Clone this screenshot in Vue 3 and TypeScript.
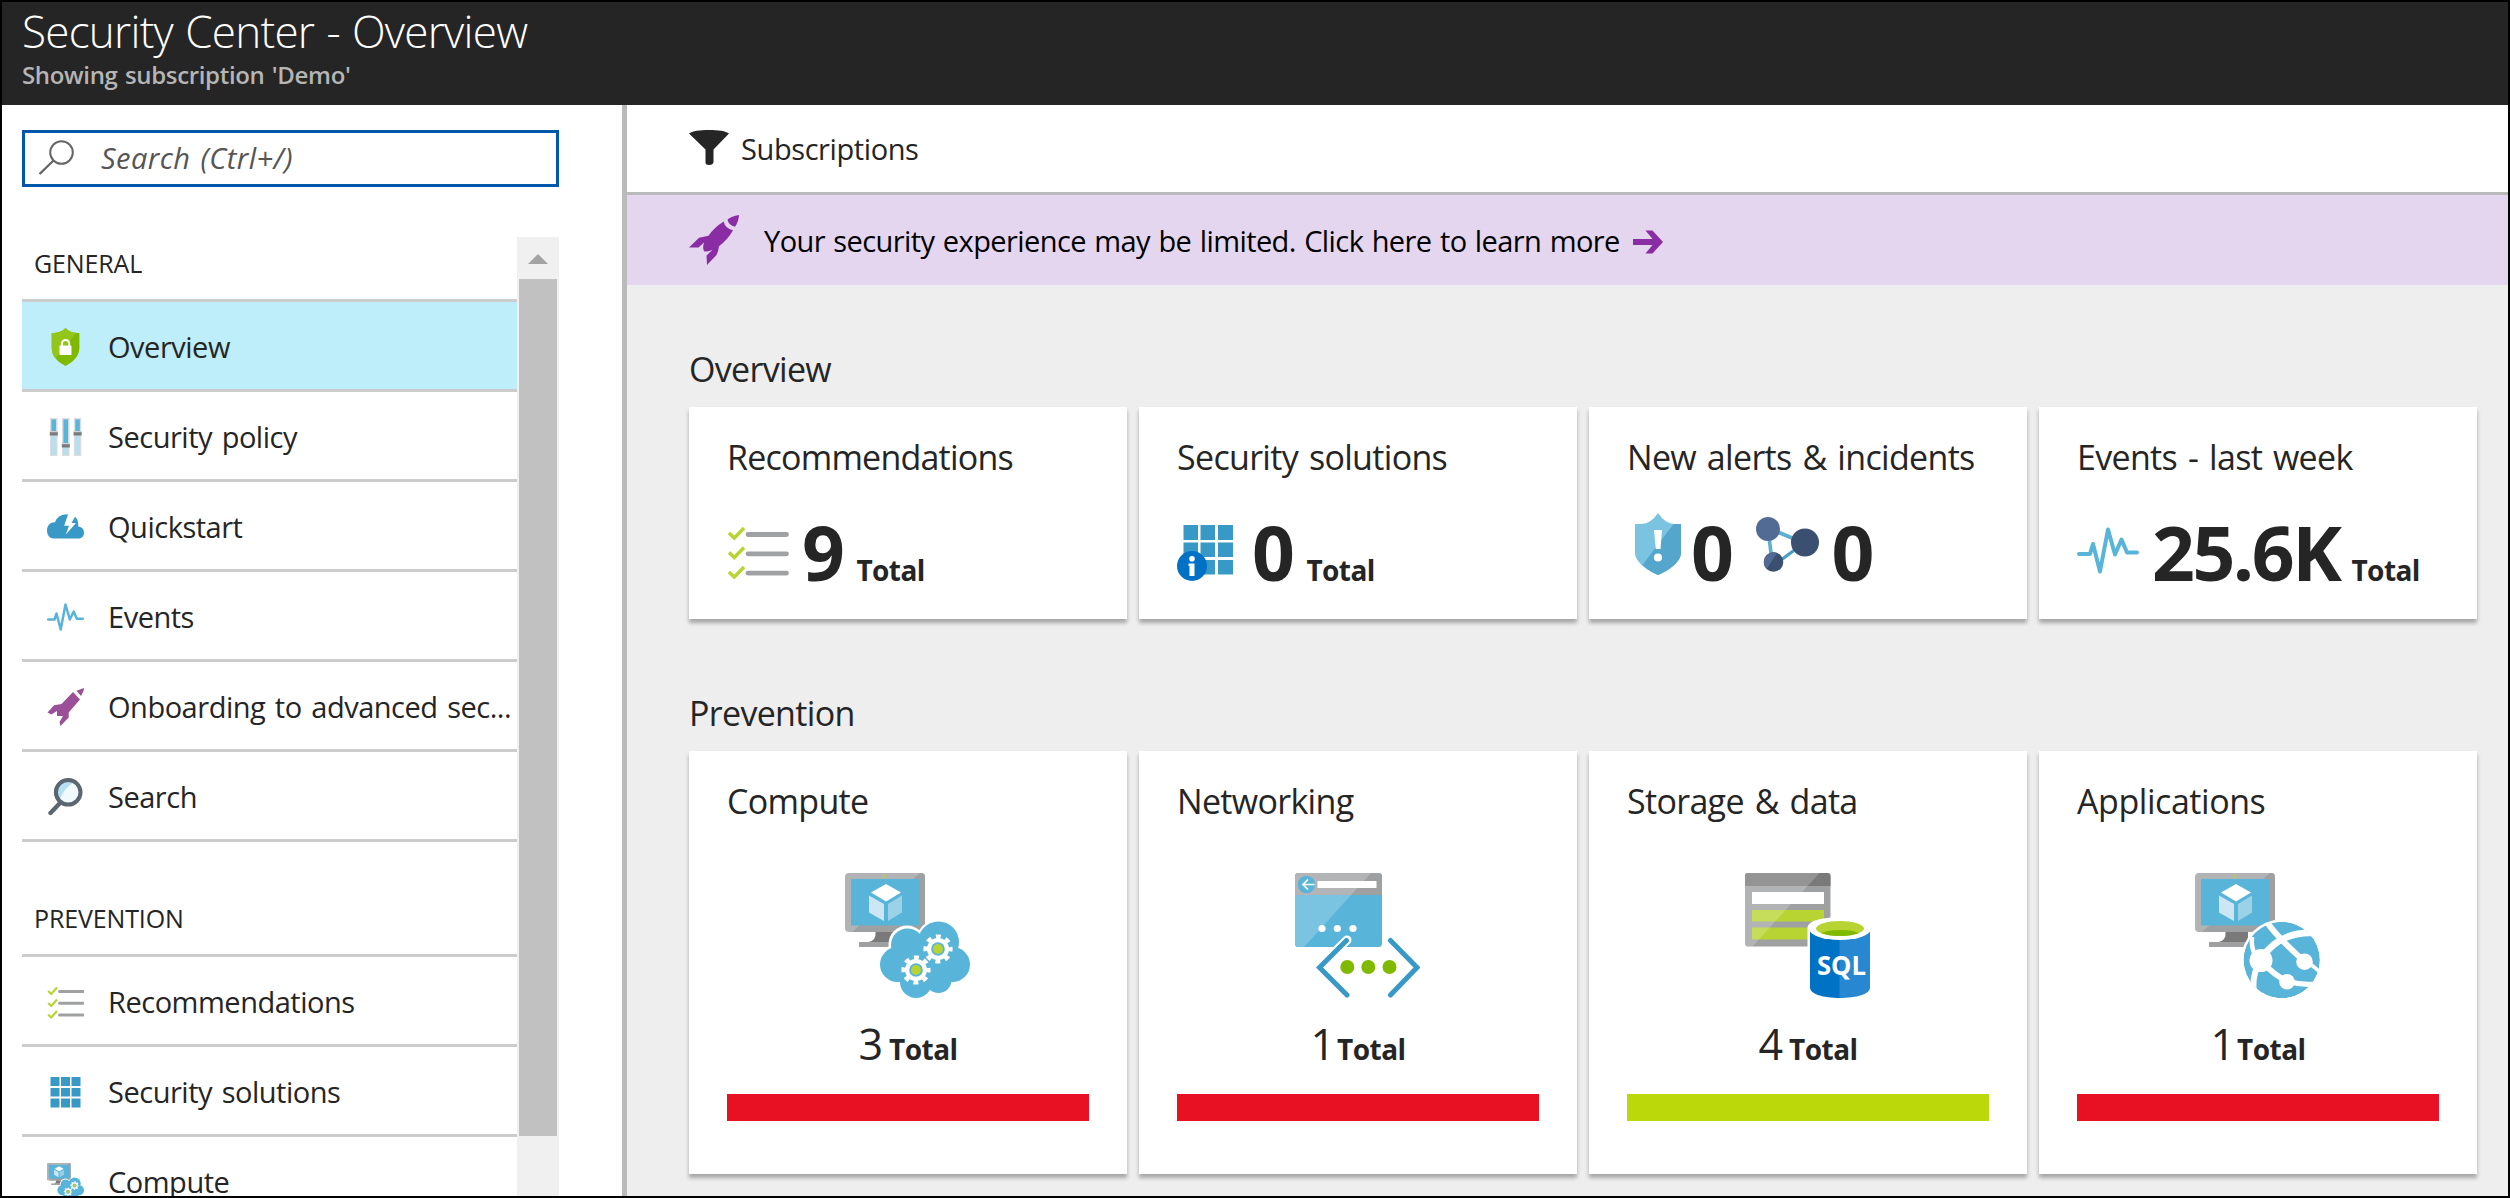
<script setup lang="ts">
interface MenuItem {
  label: string
  icon: string
  active?: boolean
}
interface MenuGroup {
  title: string
  items: MenuItem[]
}
interface Metric {
  icon: string
  value: string
  suffix?: string
}
interface Tile {
  title: string
  cls: string
  metrics: Metric[]
}
interface Resource {
  title: string
  cls: string
  icon: string
  count: number
  healthy?: boolean
}

const groups: MenuGroup[] = [
  {
    title: 'GENERAL',
    items: [
      { label: 'Overview', icon: 'shield', active: true },
      { label: 'Security policy', icon: 'sliders' },
      { label: 'Quickstart', icon: 'cloud' },
      { label: 'Events', icon: 'pulse-sm' },
      { label: 'Onboarding to advanced sec...', icon: 'rocket-sm' },
      { label: 'Search', icon: 'lens' },
    ],
  },
  {
    title: 'PREVENTION',
    items: [
      { label: 'Recommendations', icon: 'list-sm' },
      { label: 'Security solutions', icon: 'grid-sm' },
      { label: 'Compute', icon: 'compute-sm' },
    ],
  },
]

const tiles: Tile[] = [
  { title: 'Recommendations', cls: 'recommendations', metrics: [{ icon: 'list', value: '9', suffix: 'Total' }] },
  { title: 'Security solutions', cls: 'solutions', metrics: [{ icon: 'grid', value: '0', suffix: 'Total' }] },
  {
    title: 'New alerts & incidents',
    cls: 'alerts',
    metrics: [
      { icon: 'alert', value: '0' },
      { icon: 'incident', value: '0' },
    ],
  },
  { title: 'Events - last week', cls: 'events', metrics: [{ icon: 'pulse', value: '25.6K', suffix: 'Total' }] },
]

const resources: Resource[] = [
  { title: 'Compute', cls: 'compute', icon: 'compute', count: 3 },
  { title: 'Networking', cls: 'networking', icon: 'network', count: 1 },
  { title: 'Storage & data', cls: 'storage', icon: 'storage', count: 4, healthy: true },
  { title: 'Applications', cls: 'applications', icon: 'apps', count: 1 },
]
</script>

<template>
  <div class="blade">
    <svg class="sprite" width="0" height="0" aria-hidden="true">
      <symbol id="i-shield" viewBox="0 0 37 38">
        <path d="M18.5 0C22 4 27 5 32.4 5V20C32.4 29 25 34.500 18.500 38C12 34.500 4.700 29 4.700 20V5C10 5 15 4 18.500 0Z" fill="#7fba00" />
        <path d="M18.500 0C21 3 25 4.500 29 4.900L8.500 30.500C6.200 27.500 4.700 24 4.700 20V5C10 5 15 4 18.500 0Z" fill="#94c61a" />
        <rect x="12.500" y="17.500" width="12" height="9.500" rx=".8" fill="#fff" />
        <path d="M15 18V15.500a3.600 3.600 0 0 1 7.200 0V18" fill="none" stroke="#fff" stroke-width="2" />
      </symbol>
      <symbol id="i-sliders" viewBox="0 0 37 38">
        <g stroke="#dcdcdc" stroke-width="1">
          <rect x="3.500" y=".5" width="6.500" height="37" fill="#b7dff0" />
          <rect x="15.500" y=".5" width="6.500" height="37" fill="#b7dff0" />
          <rect x="27.300" y=".5" width="6.500" height="37" fill="#b7dff0" />
        </g>
        <path d="M4.500 1.500h4.500v13h-4.500zM16.500 1.500h4.500v25h-4.500zM28.300 1.500h4.500v13h-4.500z" fill="#59b4d9" />
        <path d="M2.800 14h8v3.500h-8zM14.800 26h8v3.500h-8zM26.600 14h8v3.500h-8z" fill="#7a7a7a" />
        <path d="M2.800 13h8v1.300h-8zM14.800 25h8v1.300h-8zM26.600 13h8v1.300h-8z" fill="#d0d0d0" />
      </symbol>
      <symbol id="i-cloud" viewBox="0 0 37 38">
        <path d="M7 30.500C2.500 30.500 0 27 0 22.500C0 17.500 3.500 14 8 14.300C9.500 9.500 14 6 21 6.200L17.200 17.800H22L18.800 26.500L29 15H24.500L28 8.800C30 10.500 31.500 13 31.300 18.500C35 19 37 21.500 37 24.500C37 28 35 30.500 31.500 30.500Z" fill="#3999c6" />
      </symbol>
      <symbol id="i-pulse-sm" viewBox="0 0 37 38">
        <path d="M1.200 21.500H7.500L9.500 15.500L13.700 31.500L18.500 6.500L22.800 21.500L26.700 13.500L29.800 20.700H35.800" fill="none" stroke="#59b4d9" stroke-width="2.500" stroke-linecap="round" stroke-linejoin="round" />
      </symbol>
      <symbol id="i-rocket-sm" viewBox="0 0 37 38">
        <path d="M37 0L36.500 3L34 8L29.500 2.700Z" fill="#9b4f96" />
        <path d="M26 4L33 11.500L21.700 24.500V29.500L13.500 38L12.500 34L16 28H10V23L4.300 26.500L.5 24.500L7 17.300L14.500 16Z" fill="#9b4f96" />
      </symbol>
      <symbol id="i-lens" viewBox="0 0 37 38">
        <path d="M13.500 24.500L3.500 35" stroke="#5b6672" stroke-width="4.400" stroke-linecap="round" />
        <circle cx="21.200" cy="14.300" r="12" fill="#f0f9fd" />
        <path d="M11.500 23A12 12 0 0 1 27 4Q17 10 12 23Z" fill="#b5dff3" />
        <circle cx="21.200" cy="14.300" r="12.300" fill="none" stroke="#5b6672" stroke-width="4" />
      </symbol>
      <symbol id="i-list-sm" viewBox="0 0 37 38">
        <path d="M12.500 8.500H36M12.500 20.300H36M12.500 32H36" stroke="#a0a1a2" stroke-width="3" stroke-linecap="round" />
        <path d="M1.200 8L4.200 11L10 4.500M1.200 20L4.200 23L10 16.500M1.200 31.500L4.200 34.500L10 28" fill="none" stroke="#b8d432" stroke-width="2.200" />
      </symbol>
      <symbol id="i-grid-sm" viewBox="0 0 37 38">
        <path d="M3.500 4h9v9h-9zM14 4h9v9h-9zM24.500 4h9v9h-9zM3.500 15h9v8.500h-9zM14 15h9v8.500h-9zM24.500 15h9v8.500h-9zM3.500 25.500h9v9h-9zM14 25.500h9v9h-9zM24.500 25.500h9v9h-9z" fill="#3999c6" />
      </symbol>

      <symbol id="i-funnel" viewBox="0 0 40 35">
        <path d="M0 3.500C3 1 11 0 20 0S37 1 40 3.500L24.500 19.500V32.500Q23.500 35 20 35T16.500 32.500V19.500Z" fill="#252525" />
      </symbol>
      <symbol id="i-rocket" viewBox="0 0 50 50">
        <path d="M50 0Q42.500 1 38.500 4.500Q39.500 10.500 46 11.800Q49.500 7 50 0Z" fill="#8a2da5" />
        <path d="M34.700 6.500Q36 13.500 44 15.300Q39 24.500 30 31.200Q29.500 36 27.500 40L18 50L17.500 40.500L23.500 34.800Q20 37 15.500 36.500Q13 34 15 27.500L9.500 32.500H0L10 22.800L19.500 20.800Q25 12.500 34.700 6.500Z" fill="#8a2da5" />
      </symbol>
      <symbol id="i-arrow" viewBox="0 0 30 24">
        <path d="M0 9H19.500L12.500 .5H19.500L30 12L19.500 23.500H12.500L19.500 15H0Z" fill="#8a2da5" />
      </symbol>

      <symbol id="i-list" viewBox="0 0 61 56">
        <path d="M20 10.500H58.500M20 29.800H58.500M20 49.200H58.500" stroke="#a0a1a2" stroke-width="4.800" stroke-linecap="round" />
        <path d="M1 9L6.300 14L16 4M1 28.500L6.300 33.500L16 23.500M1 48L6.300 53L16 43" fill="none" stroke="#b8d432" stroke-width="3.400" />
      </symbol>
      <symbol id="i-grid" viewBox="0 0 56 56">
        <path d="M6.500 0h14.500v15h-14.500zM23.500 0h14.500v15h-14.500zM41 0h15v15h-15zM6.500 17.500h14.500v14.500h-14.500zM23.500 17.500h14.500v14.500h-14.500zM41 17.500h15v14.500h-15zM6.500 35h14.500v14.500h-14.500zM23.500 35h14.500v14.500h-14.500zM41 35h15v14.500h-15z" fill="#3999c6" />
        <circle cx="15" cy="41" r="15" fill="#0072c6" />
        <circle cx="15" cy="33.700" r="2.800" fill="#fff" />
        <path d="M11.500 38.500H17.500V51H12.500V41H11.500Z" fill="#fff" />
      </symbol>
      <symbol id="i-alert" viewBox="0 0 46 62">
        <path d="M23 0Q30 10.500 39 11H46V40C46 49 33 58 23 62C13 58 0 49 0 40V11H7Q16 10.500 23 0Z" fill="#7bc4e1" />
        <path d="M38.500 11H46V40C46 49 33 58 23 62C17 59.500 11.500 56 7.500 52Z" fill="#55a6cd" />
        <path d="M19 17H27L25.500 36H20.800Z" fill="#fff" />
        <circle cx="23" cy="44.500" r="4.100" fill="#fff" />
      </symbol>
      <symbol id="i-incident" viewBox="0 0 63 55">
        <path d="M12 12L16 44" stroke="#5bb0cf" stroke-width="3.600" />
        <path d="M12 11L48 26" stroke="#5bb0cf" stroke-width="4" />
        <path d="M48 26L17 49" stroke="#4b9fc4" stroke-width="3.200" />
        <circle cx="12" cy="12" r="12" fill="#526b94" />
        <circle cx="49" cy="25.500" r="14" fill="#3b5070" />
        <circle cx="17.500" cy="45" r="9.800" fill="#3b5070" />
        <path d="M21 35.900A9.800 9.800 0 0 0 10.800 52Z" fill="#526b94" />
      </symbol>
      <symbol id="i-pulse" viewBox="0 0 62 56">
        <path d="M2 29H13L16 19L23 46.500L31 4.500L38 29.500L44.500 14.500L50 27.500H60" fill="none" stroke="#59b4d9" stroke-width="4" stroke-linecap="round" stroke-linejoin="round" />
      </symbol>

      <symbol id="i-monitor" viewBox="0 0 125 125">
        <rect width="80" height="59" rx="4" fill="#b2b3b5" />
        <path d="M75 0H76Q80 0 80 4V55Q80 59 76 59H7Z" fill="#9fa0a2" />
        <rect x="6" y="6" width="68.500" height="46.500" fill="#59b4d9" />
        <circle cx="39.700" cy="3.500" r="1.200" fill="#b8d432" />
        <path d="M41 11L56 19.500L41 28.500L26 19.500Z" fill="#fff" />
        <path d="M24 22.500L39 31V48L24 39.500Z" fill="#cde6f3" />
        <path d="M57 22.500L43 31V48L57 39.500Z" fill="#9bd2e8" />
        <path d="M30.500 59H53V69.500H22Q31.500 68.500 30.500 59Z" fill="#7a7a7a" />
        <rect x="14" y="69" width="38" height="5" fill="#9fa0a2" />
      </symbol>
      <symbol id="i-gear" viewBox="0 0 30 30">
        <circle cx="15" cy="15" r="11" fill="#fff" />
        <circle cx="15" cy="15" r="12" fill="none" stroke="#fff" stroke-width="5.200" stroke-dasharray="4.712" stroke-dashoffset="2.350" />
        <circle cx="15" cy="15" r="6.800" fill="#59b4d9" />
        <circle cx="15" cy="15" r="4.900" fill="#b8d432" />
      </symbol>
      <symbol id="i-compute" viewBox="0 0 125 125">
        <use href="#i-monitor" width="125" height="125" />
        <g fill="#fff">
          <circle cx="94" cy="69" r="23" />
          <circle cx="62" cy="71" r="18.500" />
          <circle cx="53" cy="91" r="20" />
        </g>
        <g fill="#59b4d9">
          <circle cx="93.500" cy="69" r="20.500" />
          <circle cx="62.500" cy="72" r="16.500" />
          <circle cx="52.500" cy="91.500" r="17.500" />
          <circle cx="107.500" cy="91.500" r="17.500" />
          <circle cx="71" cy="109" r="16" />
          <circle cx="93.500" cy="107" r="13" />
          <rect x="52" y="78" width="56" height="31" />
        </g>
        <use href="#i-gear" x="78" y="61" width="30" height="30" />
        <use href="#i-gear" x="56" y="82" width="30" height="30" />
      </symbol>
      <symbol id="i-compute-sm" viewBox="0 0 125 128">
        <use href="#i-compute" width="125" height="125" />
      </symbol>
      <symbol id="i-network" viewBox="0 0 125 125">
        <rect width="87" height="74" rx="3.500" fill="#59b4d9" />
        <path d="M3.500 0H76L9 74H3.500Q0 74 0 70.500V3.500Q0 0 3.500 0Z" fill="#7bc4e1" />
        <path d="M3.500 0H83.500Q87 0 87 3.500V22H0V3.500Q0 0 3.500 0Z" fill="#9fa0a2" />
        <path d="M3.500 0H76L56 22H0V3.500Q0 0 3.500 0Z" fill="#b3b4b6" />
        <circle cx="11.500" cy="11.500" r="8.700" fill="#59b4d9" />
        <path d="M19.500 11.500H8.500M13 6.500L8 11.500L13 16.500" fill="none" stroke="#fff" stroke-width="1.700" />
        <rect x="22.500" y="8" width="59" height="7" fill="#fff" />
        <g fill="#fff">
          <circle cx="27" cy="55.500" r="3.600" />
          <circle cx="42.300" cy="55.500" r="3.600" />
          <circle cx="58" cy="55.500" r="3.600" />
        </g>
        <path d="M52 67L24.500 94" fill="none" stroke="#fff" stroke-width="9" stroke-linecap="round" />
        <path d="M51.500 67.500L24.500 94.500L52 122M95.500 67.500L122 94.500L95.500 122" fill="none" stroke="#3999c6" stroke-width="5" stroke-linecap="round" />
        <g fill="#7fba00">
          <circle cx="52.300" cy="94" r="7" />
          <circle cx="73.300" cy="94" r="7" />
          <circle cx="94.500" cy="94" r="7" />
        </g>
      </symbol>
      <symbol id="i-storage" viewBox="0 0 125 125">
        <rect width="85.500" height="73.500" rx="3" fill="#9fa0a2" />
        <path d="M3 0H82.500Q85.500 0 85.500 3V13H0V3Q0 0 3 0Z" fill="#7a7a7a" />
        <path d="M7 37H79V48.500H7zM7 54.500H79V66.500H7z" fill="#b8d432" />
        <path d="M3 0H74.500L7.500 73.500H3Q0 73.500 0 70.500V3Q0 0 3 0Z" fill="#fff" fill-opacity=".2" />
        <rect x="7" y="19" width="72" height="12" fill="#fff" />
        <path d="M62.500 55C62.500 48 75 44.500 95 44.500S128 48 128 56V76H62.500Z" fill="#fff" />
        <path d="M65 56H95V125C78 125 65 121 65 114.500Z" fill="#0072c6" />
        <path d="M94.500 56H125V114.500C125 121 112 125 94.500 125Z" fill="#2788d1" />
        <ellipse cx="95" cy="55.500" rx="31" ry="11.500" fill="#fff" />
        <ellipse cx="95" cy="55.500" rx="24" ry="7.500" fill="#b8d432" />
        <path d="M76 60Q82 57 95 57T114 60Q107 63 95 63T76 60Z" fill="#7fba00" />
        <text x="96.500" y="102" text-anchor="middle" textLength="49" lengthAdjust="spacingAndGlyphs" class="sql">SQL</text>
      </symbol>
      <clipPath id="globe"><circle cx="86.700" cy="87" r="38.200" /></clipPath>
      <symbol id="i-apps" viewBox="0 0 125 125">
        <use href="#i-monitor" width="125" height="125" />
        <circle cx="86.700" cy="87" r="40.500" fill="#fff" />
        <g clip-path="url(#globe)">
          <circle cx="86.700" cy="87" r="38.200" fill="#59b4d9" />
          <g fill="none" stroke="#fff">
            <path d="M72 49Q80 62 109 88" stroke-width="6" />
            <path d="M66 86Q84 58 120 60" stroke-width="6.800" />
            <path d="M66 88Q80 103 92 108" stroke-width="5.500" />
            <path d="M92 108Q106 112.500 120 111" stroke-width="5" />
            <path d="M109 88Q118 92 127 101" stroke-width="3.600" />
            <path d="M57 64Q56 74 60 82" stroke-width="4.500" />
            <path d="M62 94Q57 106 59 120" stroke-width="6" />
          </g>
          <g fill="#fff">
            <circle cx="66" cy="87.500" r="11.500" />
            <circle cx="109.500" cy="88.700" r="8.300" />
            <circle cx="92" cy="108.700" r="7.800" />
          </g>
        </g>
      </symbol>
    </svg>

    <header class="header">
      <h1>Security Center - Overview</h1>
      <p>Showing subscription 'Demo'</p>
    </header>

    <div class="body">
      <aside class="side">
        <div class="search">
          <svg class="search-icon" viewBox="0 0 35 35" fill="none" stroke="#666" stroke-width="2">
            <circle cx="22.500" cy="12.500" r="11.300" />
            <path d="M14.500 20.500L.7 34" stroke-width="2.300" />
          </svg>
          <span>Search (Ctrl+/)</span>
        </div>
        <div class="menu-wrap">
          <nav class="menu">
            <section v-for="g in groups" :key="g.title" class="group">
              <h2>{{ g.title }}</h2>
              <div v-for="i in g.items" :key="i.label" class="item" :class="{ active: i.active }">
                <svg class="item-icon"><use :href="'#i-' + i.icon" /></svg>
                <span>{{ i.label }}</span>
              </div>
            </section>
          </nav>
          <div class="scrollbar">
            <div class="up"></div>
            <div class="thumb"></div>
          </div>
        </div>
      </aside>

      <main class="main">
        <div class="toolbar">
          <svg class="funnel"><use href="#i-funnel" /></svg>
          <span>Subscriptions</span>
        </div>
        <div class="banner">
          <svg class="rocket"><use href="#i-rocket" /></svg>
          <span>Your security experience may be limited. Click here to learn more</span>
          <svg class="arrow"><use href="#i-arrow" /></svg>
        </div>

        <section class="section">
          <h2>Overview</h2>
          <div class="cards">
            <article v-for="t in tiles" :key="t.title" class="card tile" :class="t.cls">
              <h3>{{ t.title }}</h3>
              <div class="metrics">
                <div v-for="m in t.metrics" :key="m.icon" class="metric">
                  <svg :class="'m-' + m.icon"><use :href="'#i-' + m.icon" /></svg>
                  <span class="value">{{ m.value }}</span>
                  <span v-if="m.suffix" class="total">{{ m.suffix }}</span>
                </div>
              </div>
            </article>
          </div>
        </section>

        <section class="section second">
          <h2>Prevention</h2>
          <div class="cards">
            <article v-for="r in resources" :key="r.title" class="card resource" :class="r.cls">
              <h3>{{ r.title }}</h3>
              <svg class="art"><use :href="'#i-' + r.icon" /></svg>
              <div class="count">
                <span class="num" :class="{ narrow: r.count === 1 }">{{ r.count }}</span>
                <span class="total">Total</span>
              </div>
              <div class="bar" :class="{ healthy: r.healthy }"></div>
            </article>
          </div>
        </section>
      </main>
    </div>
  </div>
</template>

<style>
body {
  background: #000;
}
</style>

<style scoped>
.blade {
  box-sizing: border-box;
  display: flex;
  flex-direction: column;
  width: 2510px;
  height: 1198px;
  border: 2px solid #000;
  overflow: hidden;
  background: #fff;
  color: #252525;
  font-family: "Open Sans", "Noto Sans", sans-serif;
  font-size: 29px;
}
h1, h2, h3, p {
  margin: 0;
  font-weight: 400;
}
svg {
  display: block;
  flex: none;
}
span, h1, h2, h3, p {
  white-space: nowrap;
}
.sprite {
  position: absolute;
}
.sql {
  fill: #fff;
  font: 700 27px "Open Sans", sans-serif;
}

.header {
  flex: none;
  height: 103px;
  padding-left: 20px;
  background: #252525;
}
.header h1 {
  color: #fff;
  font-size: 44px;
  font-weight: 300;
  line-height: 58px;
  letter-spacing: -0.017em;
  word-spacing: 1.5px;
}
.header p {
  color: #b5b5b5;
  font-size: 24px;
  font-weight: 600;
  line-height: 29px;
  letter-spacing: -0.014em;
  word-spacing: 1.5px;
}

.body {
  flex: 1;
  display: flex;
  min-height: 0;
}
.side {
  flex: none;
  display: flex;
  flex-direction: column;
  width: 600px;
  padding: 25px 0 0 20px;
  border-right: 5px solid #bababa;
}
.search {
  box-sizing: border-box;
  flex: none;
  display: flex;
  width: 537px;
  height: 57px;
  padding: 7px 0 0 14px;
  border: 3px solid #0058ad;
}
.search-icon {
  width: 35px;
  height: 35px;
}
.search span {
  margin-left: 27px;
  color: #555;
  font-style: italic;
  line-height: 35px;
  letter-spacing: 0.016em;
  word-spacing: 2px;
}
.menu-wrap {
  flex: 1;
  display: flex;
  width: 537px;
  min-height: 0;
  margin-top: 50px;
}
.menu {
  width: 495px;
  overflow: hidden;
}
.group h2 {
  height: 62px;
  padding-left: 12px;
  border-bottom: 3px solid #ccc;
  font-size: 25px;
  font-weight: 500;
  line-height: 53px;
  letter-spacing: -0.005em;
}
.group + .group {
  padding-top: 50px;
}
.item {
  display: flex;
  height: 87px;
  padding-left: 25px;
  border-bottom: 3px solid #ccc;
}
.item.active {
  background: #bdeef9;
}
.item-icon {
  width: 37px;
  height: 38px;
  margin: 26px 24px 0 0;
}
.item span {
  padding-top: 1px;
  line-height: 87px;
  letter-spacing: -0.0165em;
  word-spacing: 2.5px;
}
.scrollbar {
  display: flex;
  flex-direction: column;
  align-items: center;
  width: 42px;
  background: #f0f0f0;
}
.up {
  margin-top: 17px;
  border: 10px solid transparent;
  border-top: 0;
  border-bottom-color: #a3a3a3;
}
.thumb {
  width: 38px;
  height: 857px;
  margin-top: 15px;
  background: #c1c1c1;
}

.main {
  flex: 1;
  background: #eee;
}
.toolbar {
  display: flex;
  height: 87px;
  padding-left: 62px;
  border-bottom: 3px solid #bababa;
  background: #fff;
}
.funnel {
  width: 40px;
  height: 35px;
  margin: 25px 12px 0 0;
}
.toolbar span {
  line-height: 87px;
  letter-spacing: -0.014em;
}
.banner {
  display: flex;
  height: 90px;
  padding-left: 62px;
  background: #e4d6ef;
  color: #000;
}
.rocket {
  width: 50px;
  height: 50px;
  margin: 20px 25px 0 0;
}
.banner span {
  line-height: 91px;
  letter-spacing: -0.02em;
  word-spacing: 1.4px;
}
.arrow {
  width: 30px;
  height: 24px;
  margin: 35px 0 0 13px;
}

.section {
  padding: 58px 31px 0 62px;
}
.section.second {
  padding-top: 68px;
}
.section h2 {
  height: 64px;
  font-size: 34px;
  line-height: 53px;
  letter-spacing: -0.02em;
}
.cards {
  display: flex;
  gap: 12px;
}
.card {
  box-sizing: border-box;
  flex: none;
  width: 438px;
  padding: 0 38px;
  background: #fff;
  box-shadow: 0 4px 4px rgba(0, 0, 0, 0.3);
}
.card h3 {
  font-size: 34px;
  line-height: 100px;
  letter-spacing: -0.02em;
  word-spacing: 2.7px;
}
.card.recommendations h3 {
  letter-spacing: -0.023em;
}
.card.applications h3 {
  letter-spacing: -0.013em;
}
.tile {
  height: 212px;
}
.resource {
  height: 423px;
}
.metrics {
  display: flex;
}
.metric {
  display: flex;
  align-items: flex-start;
}
.value {
  font-size: 75px;
  font-weight: 700;
  line-height: 90px;
  letter-spacing: -0.033em;
}
.total {
  font-size: 28px;
  font-weight: 700;
  letter-spacing: -0.02em;
}
.metric .total {
  padding-top: 40px;
  line-height: 46px;
}
.m-list {
  width: 61px;
  height: 56px;
  margin: 17px 13px 0 1px;
}
.m-grid {
  width: 56px;
  height: 56px;
  margin: 18px 19px 0 0;
}
.m-pulse {
  width: 62px;
  height: 56px;
  margin: 18px 13px 0 0;
}
.m-alert {
  width: 46px;
  height: 62px;
  margin: 6px 10px 0 8px;
}
.m-incident {
  width: 63px;
  height: 55px;
  margin: 10px 12px 0 25px;
}
.metric .value + .total {
  margin-left: 14px;
}
.events .metric .value + .total {
  margin-left: 12px;
}
.art {
  width: 125px;
  height: 125px;
  margin: 22px 0 0 118px;
}
.count {
  display: flex;
  align-items: baseline;
  justify-content: center;
  height: 96px;
  line-height: 92px;
}
.num {
  margin-right: 6px;
  font-size: 43px;
}
.num.narrow {
  margin-right: 2px;
}
.bar {
  height: 27px;
  background: #e81123;
}
.bar.healthy {
  background: #bad80a;
}
</style>
